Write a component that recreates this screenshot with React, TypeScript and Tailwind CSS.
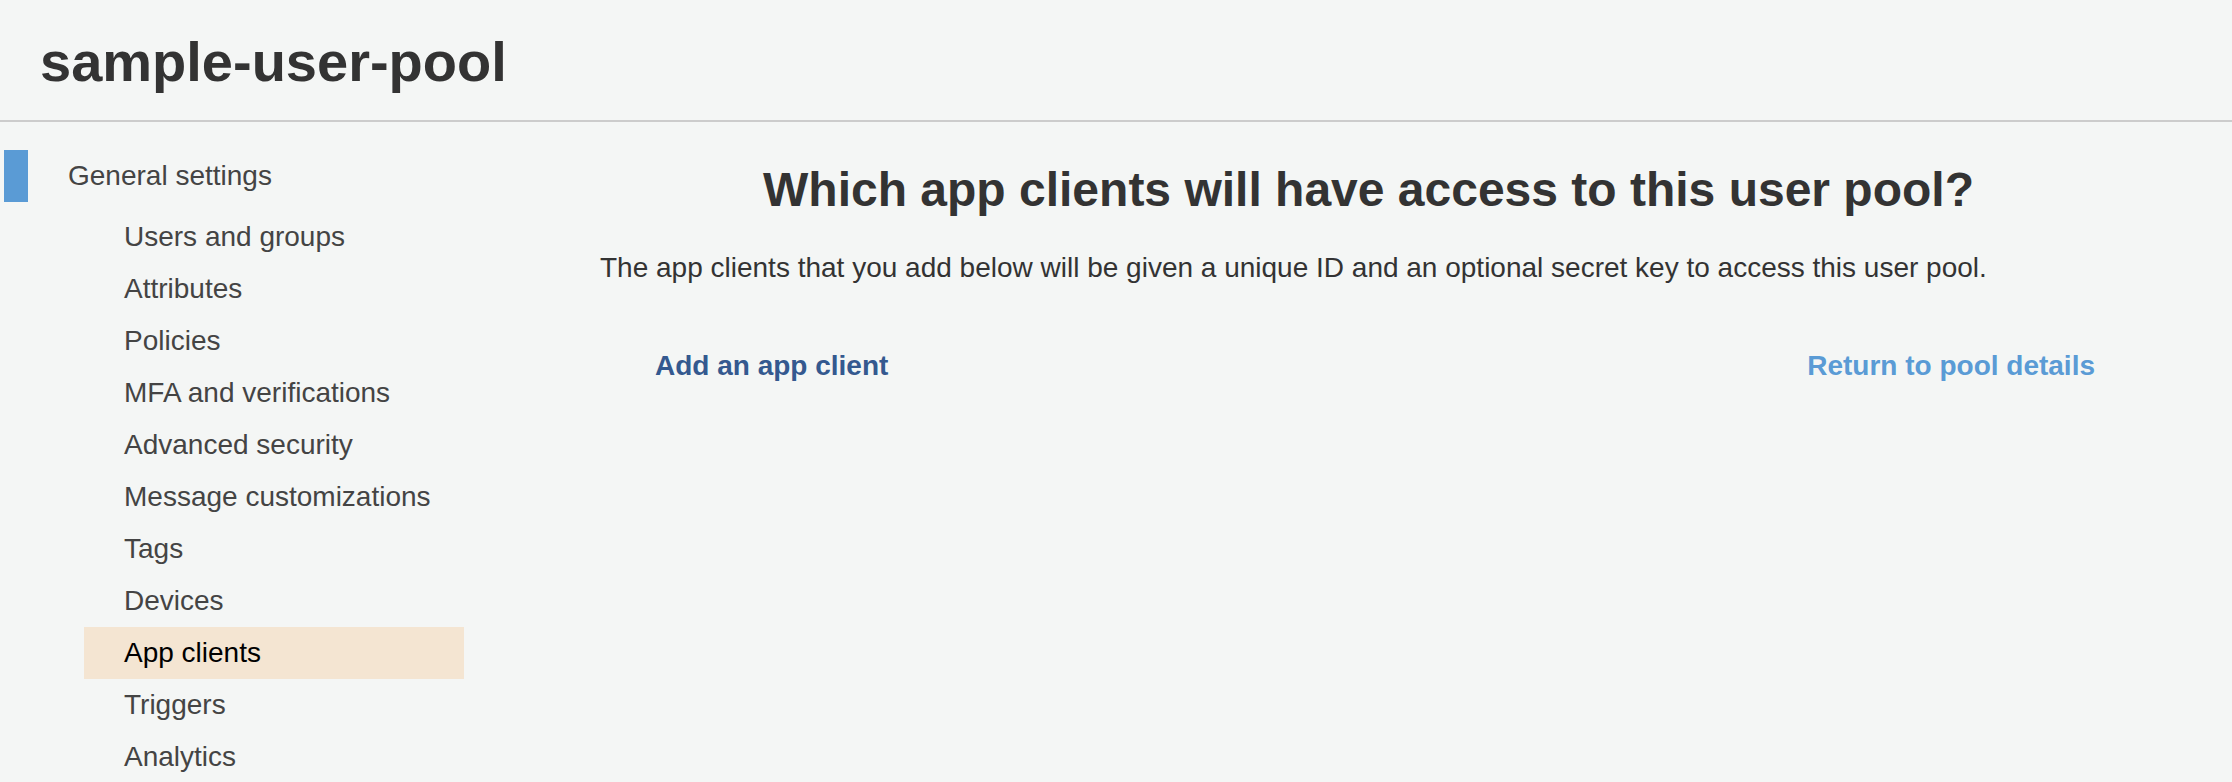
const subItems = [
  'Users and groups',
  'Attributes',
  'Policies',
  'MFA and verifications',
  'Advanced security',
  'Message customizations',
  'Tags',
  'Devices',
  'App clients',
  'Triggers',
  'Analytics',
];

const active = 'App clients';

function Sidebar() {
  return (
    <nav className="w-[464px] shrink-0 pt-[28px]">
      <div className="flex h-[52px] items-stretch">
        <div className="ml-[4px] w-[24px] bg-[#5a9bd5]" />
        <span className="ml-[40px] text-[28px] leading-[52px] text-[#444444]">General settings</span>
      </div>
      <ul className="mt-[9px]">
        {subItems.map((item) => (
          <li
            key={item}
            className={`ml-[84px] h-[52px] w-[380px] pl-[40px] text-[28px] leading-[52px] ${
              item === active ? 'bg-[#f4e5d2] text-black' : 'text-[#444444]'
            }`}
          >
            {item}
          </li>
        ))}
      </ul>
    </nav>
  );
}

export default function App() {
  return (
    <div className="min-h-screen bg-[#f4f6f5] font-['Liberation_Sans',Arial,sans-serif] text-[#333333]">
      <header className="h-[122px] border-b-2 border-[#cccccc] pl-[40px] pt-[34px]">
        <h1 className="text-[56px] font-bold leading-[56px] text-[#333333]">sample-user-pool</h1>
      </header>
      <div className="flex">
        <Sidebar />
        <main className="ml-[136px] mr-[95px] flex-1 pt-[40px]">
          <h2 className="text-center text-[48px] font-bold leading-[56px] text-[#333333]">
            Which app clients will have access to this user pool?
          </h2>
          <p className="mt-[30px] text-[28px] leading-[40px] text-[#333333]">
            The app clients that you add below will be given a unique ID and an optional secret key to access this user pool.
          </p>
          <div className="mt-[58px] flex justify-between pl-[55px] pr-[42px] text-[28px] font-bold leading-[40px]">
            <a className="cursor-pointer text-[#34598f]">Add an app client</a>
            <a className="cursor-pointer text-[#5a9bd5]">Return to pool details</a>
          </div>
        </main>
      </div>
    </div>
  );
}
